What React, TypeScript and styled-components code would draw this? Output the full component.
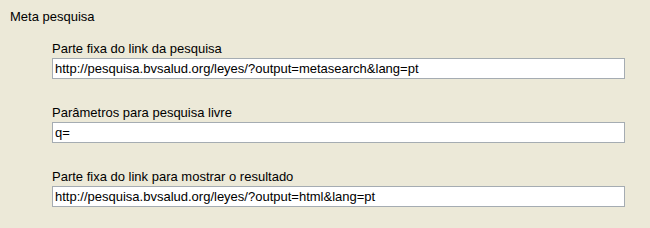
import React from "react";
import styled, { createGlobalStyle } from "styled-components";

const Global = createGlobalStyle`
  html, body {
    margin: 0;
    padding: 0;
    background: #ece9d8;
  }
  body {
    font-family: "Liberation Sans", Arial, sans-serif;
    font-size: 13px;
    color: #000;
  }
`

const Panel = styled.div`
  width: 650px;
  height: 228px;
  box-sizing: border-box;
  padding: 9px 0 0 10px;
  background: #ece9d8;
`
const Title = styled.div`
  line-height: 15px;
`
const FieldList = styled.div`
  display: flex;
  flex-direction: column;
  gap: 26px;
  margin-top: 17px;
  padding-left: 42px;
`
const Field = styled.div`
  display: flex;
  flex-direction: column;
`
const Label = styled.label`
  line-height: 15px;
  margin-bottom: 2px;
`
const Input = styled.input`
  box-sizing: border-box;
  width: 573px;
  height: 21px;
  margin: 0;
  padding: 0 2px;
  border: 1px solid #a5acb2;
  background: #fff;
  font-family: "Liberation Sans", Arial, sans-serif;
  font-size: 13px;
  color: #000;
  outline: none;
`

const fields = [
    {label: "Parte fixa do link da pesquisa", value: "http://pesquisa.bvsalud.org/leyes/?output=metasearch&lang=pt"},
    {label: "Parâmetros para pesquisa livre", value: "q="},
    {label: "Parte fixa do link para mostrar o resultado", value: "http://pesquisa.bvsalud.org/leyes/?output=html&lang=pt"},
]

function App() {
    return (
        <>
            <Global/>
            <Panel>
                <Title>Meta pesquisa</Title>
                <FieldList>
                    {fields.map(f =>
                        <Field key={f.label}>
                            <Label>{f.label}</Label>
                            <Input type="text" defaultValue={f.value}/>
                        </Field>
                    )}
                </FieldList>
            </Panel>
        </>
    );
}
export default App;
